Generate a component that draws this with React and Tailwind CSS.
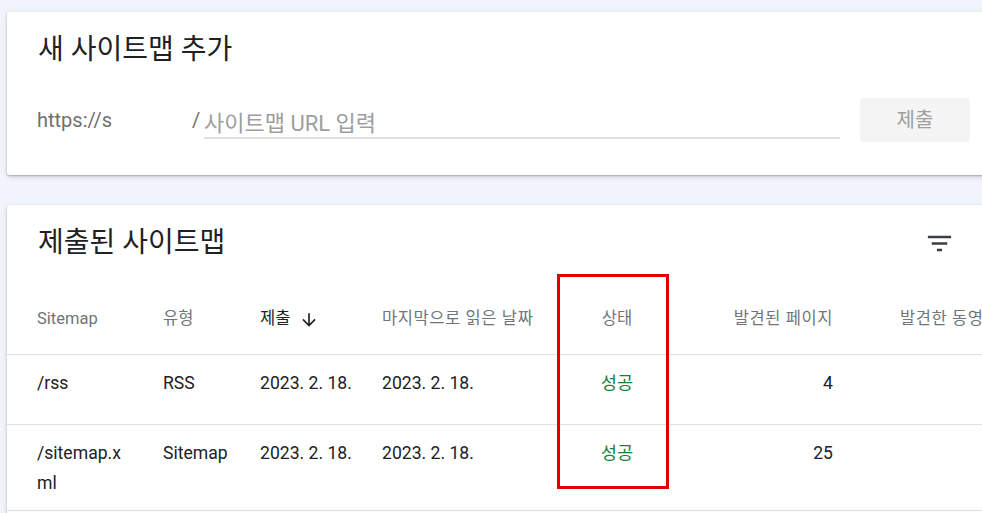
const cols = "grid grid-cols-[126px_97px_122px_175px_120px_156px_220px] pl-[30px]";

function FilterIcon() {
  return (
    <svg width="31" height="31" viewBox="0 0 24 24" fill="#3c4043">
      <path d="M10 18h4v-2h-4v2zM3 6v2h18V6H3zm3 7h12v-2H6v2z" />
    </svg>
  );
}

function ArrowDown() {
  return (
    <svg width="20" height="20" viewBox="0 0 24 24" fill="#202124">
      <path d="M20 12l-1.41-1.41L13 16.17V4h-2v12.17l-5.58-5.59L4 12l8 8 8-8z" />
    </svg>
  );
}

const rows = [
  { path: "/rss", type: "RSS", submitted: "2023. 2. 18.", read: "2023. 2. 18.", pages: 4 },
  { path: "/sitemap.xml", type: "Sitemap", submitted: "2023. 2. 18.", read: "2023. 2. 18.", pages: 25 },
];

export default function App() {
  return (
    <main className="h-[513px] overflow-hidden bg-[#f1f4fb] pl-[7px] pt-[12px] font-['Roboto','Noto_Sans_CJK_KR',sans-serif]">
      <section className="w-[1000px] rounded-[3px] bg-white pb-[33px] pl-[30px] shadow-[0_1px_2px_rgba(60,64,67,0.35),0_2px_5px_rgba(60,64,67,0.15)]">
        <h1 className="pl-[1px] pt-[22px] text-[28px] leading-[32px] text-[#202124]">새 사이트맵 추가</h1>
        <div className="mt-[32px] flex h-[44px] items-center">
          <div className="w-[155px]">
            <span className="block w-[76px] overflow-hidden whitespace-nowrap text-[20px] text-[#6f6f6f]">https://sample.com</span>
          </div>
          <span className="w-[12px] text-[20px] text-[#6f6f6f]">/</span>
          <input
            className="mt-[2px] h-[36px] w-[636px] border-b-2 border-[#e0e0e0] pt-[6px] text-[22px] outline-none placeholder:text-[#9e9e9e]"
            placeholder="사이트맵 URL 입력"
          />
          <button className="ml-[20px] h-[44px] w-[110px] rounded-[4px] bg-[#f4f4f4] text-[20px] text-[#9e9e9e]">제출</button>
        </div>
      </section>

      <section className="relative mt-[30px] h-[400px] w-[1000px] rounded-[3px] bg-white shadow-[0_1px_2px_rgba(60,64,67,0.35),0_2px_5px_rgba(60,64,67,0.15)]">
        <div className="flex items-center justify-between pl-[31px] pr-[52px] pt-[22px]">
          <h2 className="text-[28px] leading-[32px] text-[#202124]">제출된 사이트맵</h2>
          <FilterIcon />
        </div>

        <div className={`${cols} mt-[26px] h-[70px] items-center border-b border-[#e0e0e0] text-[16.5px] text-[#70757a]`}>
          <span>Sitemap</span>
          <span>유형</span>
          <span className="flex items-center gap-[9px] text-[#202124]">
            제출
            <ArrowDown />
          </span>
          <span className="tracking-[0.6px]">마지막으로 읽은 날짜</span>
          <span className="text-center">상태</span>
          <span className="text-right tracking-[0.6px]">발견된 페이지</span>
          <span className="whitespace-nowrap pl-[67px] tracking-[0.6px]">발견한 동영상</span>
        </div>

        {rows.map((row) => (
          <div
            key={row.path}
            className={`${cols} min-h-[70px] items-start border-b border-[#e0e0e0] pb-[12px] pt-[13px] text-[17.6px] leading-[30px] text-[#202124]`}
          >
            <span className="w-[90px] break-all">{row.path}</span>
            <span>{row.type}</span>
            <span>{row.submitted}</span>
            <span>{row.read}</span>
            <span className="text-center text-[#188038]">성공</span>
            <span className="text-right">{row.pages}</span>
            <span />
          </div>
        ))}

        <div className="absolute left-[550px] top-[69px] h-[215px] w-[112px] border-[3px] border-[#e00000]" />
      </section>
    </main>
  );
}
